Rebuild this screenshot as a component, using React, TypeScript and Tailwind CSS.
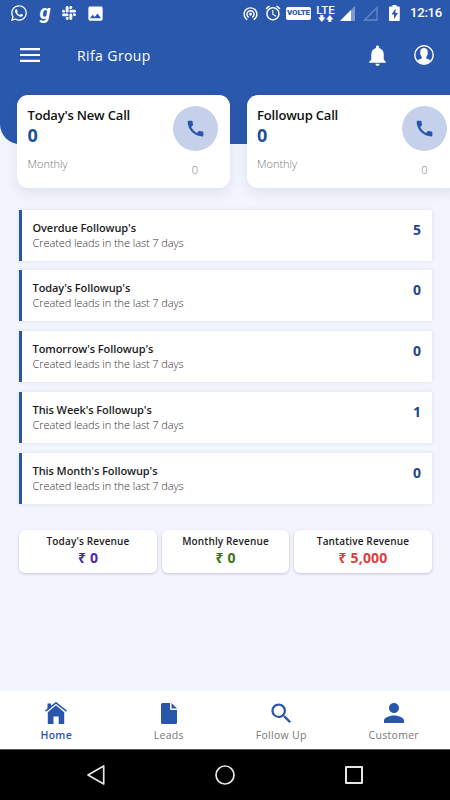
import React from "react";
import { MdAlarm, MdCall, MdImage, MdNotifications, MdPerson, MdSearch, MdWifiTethering } from "react-icons/md";
import { FaSlack, FaWhatsapp } from "react-icons/fa";

const followups = [
  { title: "Overdue Followup's", count: 5 },
  { title: "Today's Followup's", count: 0 },
  { title: "Tomorrow's Followup's", count: 0 },
  { title: "This Week's Followup's", count: 1 },
  { title: "This Month's Followup's", count: 0 },
];

function StatusBar() {
  return (
    <div className="flex h-[26px] items-center text-white">
      <FaWhatsapp className="ml-[10px] size-[18px] shrink-0" />
      <span className="ml-[10px] flex h-[26px] w-[14px] items-center justify-center pb-[3px] font-['Roboto',sans-serif] text-[20px] leading-[24px] font-bold italic">g</span>
      <FaSlack className="ml-[9px] size-[16px] shrink-0 -scale-x-100" />
      <MdImage className="ml-[9px] size-[19px] shrink-0" />
      <MdWifiTethering className="ml-[137px] size-[17px] shrink-0" />
      <MdAlarm className="ml-[5px] size-[18px] shrink-0" />
      <span className="ml-[4px] flex h-[13px] w-[25px] shrink-0 items-center justify-center rounded-[2px] bg-white font-['Roboto',sans-serif] text-[8px] font-black tracking-[-0.2px] text-[#2a58ac]">VOLTE</span>
      <span className="ml-[5px] flex h-[17px] w-[19px] shrink-0 flex-col items-center">
        <span className="font-['Roboto',sans-serif] text-[11.500px] leading-[10px] font-medium">LTE</span>
        <svg className="h-[7px] w-[15px]" viewBox="0 0 15 7" fill="currentColor">
          <path d="M2.300 0h3v2.500h2.200L3.800 6.900.1 2.500h2.200zM10.300 6.900h3V4.400h2L11.800 0 8.100 4.400h2.200z" />
        </svg>
      </span>
      <svg className="ml-[5px] size-[15px] shrink-0" viewBox="0 0 15 15">
        <path d="M0 15 15 0v15z" fill="#7c9ad0" />
        <path d="M0 15 11 4v11z" fill="#fff" />
      </svg>
      <svg className="ml-[8px] size-[15px] shrink-0" viewBox="0 0 15 15">
        <path d="M1.500 14 14 1.500V14z" fill="none" stroke="#6488c7" strokeWidth="1.300" />
      </svg>
      <svg className="ml-[11px] h-[16px] w-[11px] shrink-0" viewBox="0 0 11 16">
        <path d="M3.500 0h4v1.500H10a1 1 0 0 1 .8 1V15a1 1 0 0 1-1 1H1a1 1 0 0 1-1-1V2.500a1 1 0 0 1 1-1h2.500z" fill="#fff" />
        <path d="M6.500 3.500 2.500 9.500H5V14l4-6H6.500z" fill="#2a58ac" />
      </svg>
      <span className="ml-[10px] font-['Roboto',sans-serif] text-[13px] font-medium tracking-[-0.2px] whitespace-nowrap">12:16</span>
    </div>
  );
}

function AppBar() {
  return (
    <div className="flex h-[58px] items-center text-white">
      <svg className="ml-[20px] h-[14px] w-[20px]" viewBox="0 0 20 14" fill="currentColor">
        <path d="M0 0h20v2.200H0zM0 5.900h20v2.200H0zM0 11.800h20V14H0z" />
      </svg>
      <h1 className="ml-[37px] text-[14px] tracking-[0.4px]">Rifa Group</h1>
      <MdNotifications className="ml-auto size-[25px]" />
      <svg className="mr-[16px] ml-[24px] size-[20px]" viewBox="0 0 20 20">
        <circle cx="10" cy="10" r="9.200" fill="none" stroke="#fff" strokeWidth="1.400" />
        <path d="M3.500 15.500c1-1.100 3.400-1.300 4.300-2.200.3-.6 0-1.300-.6-2.100-.6-.9-1-2.100-1-3.700C6.200 4.300 7.700 3 10 3s3.800 1.300 3.800 4.500c0 1.600-.4 2.800-1 3.700-.6.800-.9 1.500-.6 2.100.9.900 3.300 1.100 4.300 2.200C15 18 12.500 19 10 19s-5-1-6.500-3.500z" fill="#fff" />
      </svg>
    </div>
  );
}

function CallCard({ title }: { title: string }) {
  return (
    <article className="flex h-[93px] w-[213px] shrink-0 justify-between rounded-[11px] bg-white pr-[12.500px] pl-[10.500px] shadow-[0_5px_12px_rgba(40,50,90,0.09)]">
      <div>
        <h2 className="mt-[10px] text-[13px] leading-[20px] font-semibold tracking-[-0.18px] whitespace-nowrap text-[#111]">{title}</h2>
        <p className="text-[18px] leading-[21px] font-bold text-[#1f4f9f]">0</p>
        <p className="mt-[10px] text-[11px] leading-[16px] font-light text-[#777]">Monthly</p>
      </div>
      <div className="mt-[11px] flex flex-col items-center">
        <span className="flex size-[45px] items-center justify-center rounded-full bg-[#c5d1ea]">
          <MdCall className="size-[21px] text-[#2856aa]" />
        </span>
        <span className="mt-[11px] text-[11px] leading-[16px] font-light text-[#777]">0</span>
      </div>
    </article>
  );
}

function Revenue({ label, value, className }: { label: string; value: string; className: string }) {
  return (
    <article className="h-[43px] rounded-[6px] bg-white pt-[4px] text-center shadow-[0_1px_3px_rgba(40,30,60,0.22)]">
      <h3 className="text-[10px] leading-[15px] font-semibold tracking-[0.15px] whitespace-nowrap text-[#1c1c22]">{label}</h3>
      <p className={"text-[14px] leading-[18px] font-bold tracking-[0.2px] " + className}>{value}</p>
    </article>
  );
}

function NavItem({ label, active, children }: { label: string; active?: boolean; children: React.ReactNode }) {
  return (
    <div className="flex flex-col items-center pt-[10px] text-[#2856aa]">
      <span className="flex h-[24px] items-center">{children}</span>
      <span className={active ? "mt-[2px] text-[10.500px] leading-[16px] font-semibold tracking-[0.3px]" : "mt-[2px] text-[10.500px] leading-[16px] tracking-[0.3px] text-[#777]"}>{label}</span>
    </div>
  );
}

export default function App() {
  return (
    <div className="flex h-[800px] w-[450px] flex-col overflow-hidden bg-[#f2f4fe] font-['Open_Sans','Noto_Sans',sans-serif]">
      <header className="h-[144px] shrink-0 rounded-b-[20px] bg-[#2a58ac]">
        <StatusBar />
        <AppBar />
      </header>
      <main className="-mt-[49px] flex-1">
        <section className="flex gap-[16.500px] pl-[17px]">
          <CallCard title="Today's New Call" />
          <CallCard title="Followup Call" />
        </section>
        <section className="mt-[21.600px] mr-[18px] ml-[19px] flex flex-col gap-[9.900px]">
          {followups.map((f) => (
            <article key={f.title} className="flex h-[51px] justify-between border-l-[3px] border-[#2856a3] bg-white pt-[10px] pr-[11px] pl-[10.500px] shadow-[0_0_4px_rgba(50,50,80,0.11)]">
              <div>
                <h3 className="text-[11px] leading-[16px] font-semibold tracking-[-0.08px] text-[#1c1c1c]">{f.title}</h3>
                <p className="text-[11px] leading-[14px] font-light tracking-[-0.08px] text-[#333]">Created leads in the last 7 days</p>
              </div>
              <span className="text-[14px] leading-[20px] font-bold text-[#1f478f]">{f.count}</span>
            </article>
          ))}
        </section>
        <section className="mt-[25.900px] mr-[18px] ml-[19px] grid grid-cols-[138px_127px_138px] gap-[5px]">
          <Revenue label="Today's Revenue" value="₹ 0" className="text-[#4527b8]" />
          <Revenue label="Monthly Revenue" value="₹ 0" className="text-[#3c7418]" />
          <Revenue label="Tantative Revenue" value="₹ 5,000" className="text-[#dc3d43]" />
        </section>
      </main>
      <nav className="grid h-[58px] shrink-0 grid-cols-4 bg-white">
        <NavItem label="Home" active>
          <svg className="h-[22px] w-[22px]" viewBox="0 0 22 22">
            <path d="M2.500 1.500H6V7L2.500 10z" fill="currentColor" />
            <path d="m2.800 10.300 8.200-7 8.200 7V22h-5.500v-7.500H8.500V22H2.800z" fill="currentColor" />
            <path d="M1 10.500 11 2.200l10 8.300" fill="none" stroke="#fff" strokeWidth="1.100" />
            <path d="M.5 9.200 11 .8l10.500 8.400" fill="none" stroke="currentColor" strokeWidth="1.500" />
          </svg>
        </NavItem>
        <NavItem label="Leads">
          <svg className="h-[21px] w-[16px]" viewBox="0 0 16 21" fill="currentColor">
            <path d="M1.500 0H9v5.500A1.500 1.500 0 0 0 10.500 7H16v12.500a1.500 1.500 0 0 1-1.500 1.500h-13A1.500 1.500 0 0 1 0 19.500v-18A1.500 1.500 0 0 1 1.500 0zM10.500 0 16 5.500h-5.500z" />
          </svg>
        </NavItem>
        <NavItem label="Follow Up"><MdSearch className="size-[27px]" /></NavItem>
        <NavItem label="Customer"><MdPerson className="size-[30px]" /></NavItem>
      </nav>
      <footer className="flex h-[51px] shrink-0 items-center border-t border-[#555] bg-black pb-px pl-[87px]">
        <svg className="h-[20px] w-[18px]" viewBox="0 0 18 20" fill="none" stroke="#e5e5e5" strokeWidth="1.700"><path d="M1 10 16.700 1v18z" strokeLinejoin="round" /></svg>
        <svg className="ml-[110px] size-[20px]" viewBox="0 0 20 20" fill="none" stroke="#e5e5e5" strokeWidth="1.700"><circle cx="10" cy="10" r="9" /></svg>
        <span className="ml-[110px] size-[18px] rounded-[1px] border-2 border-[#e5e5e5]" />
      </footer>
    </div>
  );
}
